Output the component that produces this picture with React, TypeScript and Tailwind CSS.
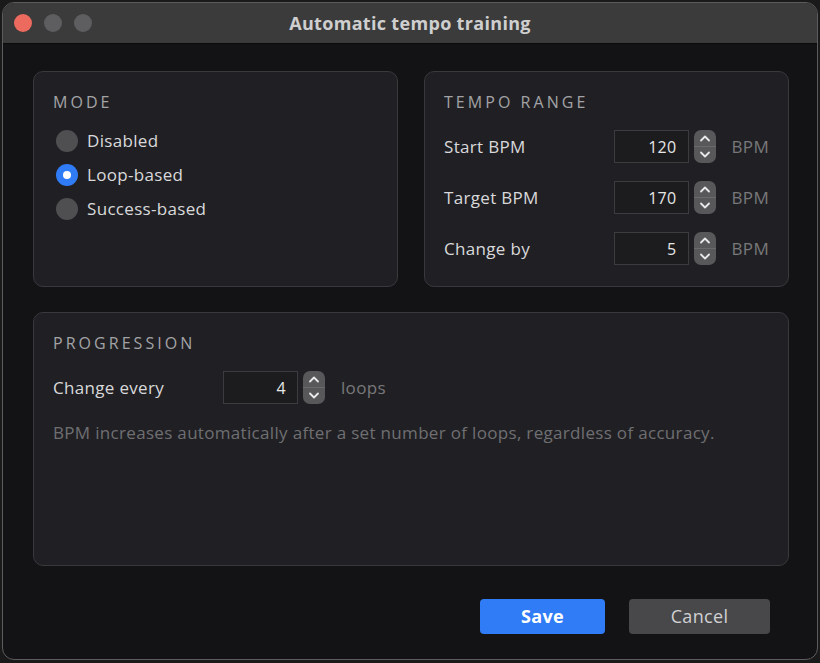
import { useState } from 'react';

const font = { fontFamily: '"Open Sans", Lato, sans-serif' };

function Spinner() {
  return (
    <div className="flex h-[33px] w-[22px] flex-col overflow-hidden rounded-[7px] bg-[#58585b]">
      <div className="flex flex-1 items-center justify-center border-b border-[#6a6a6d]">
        <svg width="12" height="8" viewBox="0 0 12 8" fill="none">
          <path d="M2 6.5 6 2.5l4 4" stroke="#e8e8e8" strokeWidth="1.8" strokeLinecap="round" strokeLinejoin="round" />
        </svg>
      </div>
      <div className="flex flex-1 items-center justify-center">
        <svg width="12" height="8" viewBox="0 0 12 8" fill="none">
          <path d="M2 1.5 6 5.5l4-4" stroke="#e8e8e8" strokeWidth="1.8" strokeLinecap="round" strokeLinejoin="round" />
        </svg>
      </div>
    </div>
  );
}

function NumberField({ value, unit }: { value: number; unit: string }) {
  return (
    <div className="flex items-center">
      <div className="flex h-[33px] w-[75px] items-center justify-end border border-[#3c3c3e] bg-[#1c1c1e] pr-[11px] text-[16px] text-[#e6e6e6]">
        {value}
      </div>
      <div className="ml-[5px]">
        <Spinner />
      </div>
      <span className="ml-[16px] text-[17px] text-[#78787a]">{unit}</span>
    </div>
  );
}

function SectionTitle({ children }: { children: string }) {
  return <div className="text-[16px] leading-5 tracking-[0.19em] text-[#a3a3a6]">{children}</div>;
}

const modes = ['Disabled', 'Loop-based', 'Success-based'];

export default function App() {
  const [mode, setMode] = useState('Loop-based');

  return (
    <div className="h-[663px] w-[820px] bg-[#1a1a1a] p-[2px] tracking-[0.02em]" style={font}>
      <div className="flex h-[658px] w-[816px] flex-col overflow-hidden rounded-[12px] border border-[#5c5c5e] bg-[#131315]">
        <div className="relative flex h-[41px] shrink-0 items-center justify-center border-b border-[#0b0b0c] bg-[#3b3b3c]">
          <div className="absolute left-[11px] top-[11px] flex gap-[12px]">
            <span className="h-[18px] w-[18px] rounded-full bg-[#ed6a5e]" />
            <span className="h-[18px] w-[18px] rounded-full bg-[#5e5e60]" />
            <span className="h-[18px] w-[18px] rounded-full bg-[#5e5e60]" />
          </div>
          <h1 className="text-[18px] font-bold text-[#cfcfcf]">Automatic tempo training</h1>
        </div>

        <div className="flex flex-1 flex-col pl-[30px] pr-[28px] pt-[27px]">
          <div className="grid grid-cols-2 gap-[26px]">
            <section className="h-[216px] rounded-[10px] border border-[#39393d] bg-[#202024] px-[19px] pt-[20px]">
              <SectionTitle>MODE</SectionTitle>
              <div className="mt-[17px] flex flex-col gap-[11px] pl-[3px]">
                {modes.map((m) => (
                  <button
                    key={m}
                    type="button"
                    className="flex h-[23px] items-center gap-[9px] text-[17px] text-[#d9d9db]"
                    onClick={() => setMode(m)}
                  >
                    {mode === m ? (
                      <span className="flex h-[22px] w-[22px] items-center justify-center rounded-full bg-[#2f7cf6]">
                        <span className="h-[8px] w-[8px] rounded-full bg-white" />
                      </span>
                    ) : (
                      <span className="h-[22px] w-[22px] rounded-full bg-[#4f4f52]" />
                    )}
                    {m}
                  </button>
                ))}
              </div>
            </section>

            <section className="h-[216px] rounded-[10px] border border-[#39393d] bg-[#202024] px-[19px] pt-[20px]">
              <SectionTitle>TEMPO RANGE</SectionTitle>
              <div className="mt-[18px] flex flex-col gap-[18px]">
                {[
                  ['Start BPM', 120],
                  ['Target BPM', 170],
                  ['Change by', 5],
                ].map(([label, v]) => (
                  <div key={label} className="flex items-center justify-between">
                    <span className="text-[17px] text-[#d9d9db]">{label}</span>
                    <NumberField value={v as number} unit="BPM" />
                  </div>
                ))}
              </div>
            </section>
          </div>

          <section className="mt-[25px] h-[254px] rounded-[10px] border border-[#39393d] bg-[#202024] px-[19px] pt-[20px]">
            <SectionTitle>PROGRESSION</SectionTitle>
            <div className="mt-[18px] flex items-center">
              <span className="w-[170px] text-[17px] text-[#d9d9db]">Change every</span>
              <NumberField value={4} unit="loops" />
            </div>
            <p className="mt-[16px] text-[17px] text-[#6f6f72]">
              BPM increases automatically after a set number of loops, regardless of accuracy.
            </p>
          </section>

          <div className="mt-[33px] flex justify-end gap-[24px] pr-[19px]">
            <button type="button" className="h-[35px] w-[125px] rounded-[4px] bg-[#2f7cf6] text-[18px] font-bold text-white">
              Save
            </button>
            <button type="button" className="h-[35px] w-[141px] rounded-[4px] bg-[#48484b] text-[18px] text-[#d0d0d2]">
              Cancel
            </button>
          </div>
        </div>
      </div>
    </div>
  );
}
